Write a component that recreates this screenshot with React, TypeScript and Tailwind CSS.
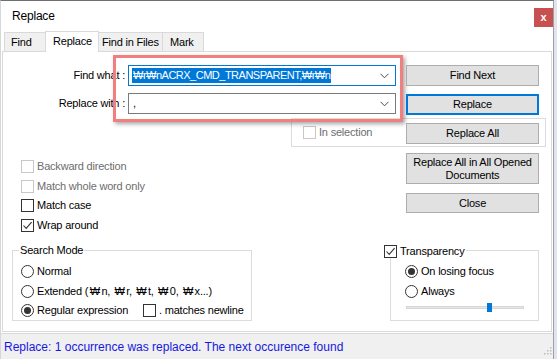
import React from "react";

function Check({ checked = false, disabled = false }: { checked?: boolean; disabled?: boolean }) {
  return (
    <span
      className={`w-[13px] h-[13px] border ${disabled ? "border-[#c8c8c8]" : "border-[#333333]"} bg-white flex items-center justify-center shrink-0`}
    >
      {checked && (
        <svg width="11" height="11" viewBox="0 0 11 11">
          <path d="M1.5 5.5 L4.2 8.4 L9.6 2.2" fill="none" stroke="#333" strokeWidth="1.1" />
        </svg>
      )}
    </span>
  );
}

function Radio({ on = false }: { on?: boolean }) {
  return (
    <span className="w-[13px] h-[13px] rounded-full border border-[#333333] bg-white flex items-center justify-center shrink-0">
      {on && <span className="w-[7px] h-[7px] rounded-full bg-[#333333]" />}
    </span>
  );
}

function Btn({ className, children, def = false }: { className: string; children: React.ReactNode; def?: boolean }) {
  return (
    <div
      className={`w-[133px] shrink-0 bg-[#e1e1e1] ${def ? "border-2 border-[#0078d7]" : "border border-[#adadad]"} flex items-center justify-center text-center leading-[13px] ${className}`}
    >
      {children}
    </div>
  );
}

function Chevron() {
  return (
    <svg width="9" height="6" viewBox="0 0 9 6" className="shrink-0">
      <path d="M0.5 0.8 L4.5 4.8 L8.5 0.8" fill="none" stroke="#4d4d4d" strokeWidth="1" />
    </svg>
  );
}

function Won() {
  return <span className="px-[1.5px]">₩</span>;
}

export default function App() {
  return (
    <div className="w-[557px] h-[359px] bg-[#dfe4ee] overflow-hidden font-['Liberation_Sans','Noto_Sans','Noto_Sans_CJK_KR',sans-serif] text-[11px] tracking-[-0.2px] text-black leading-none">
      <div className="relative w-[554px] h-[359px] bg-white border-t border-t-[#6e6e6e] border-l border-l-[#d4d7de] border-r border-r-[#a0a0a0] flex flex-col">
        {/* title bar */}
        <div className="h-[30px] shrink-0 flex items-center justify-between pl-[11px]">
          <span className="text-[12px] tracking-[-0.2px]">Replace</span>
          <div className="w-[19px] h-[19px] mt-[3px] bg-[#c75050] flex items-center justify-center text-white text-[11px] font-bold">
            x
          </div>
        </div>

        {/* tabs */}
        <div className="h-[20px] shrink-0 flex items-end pl-[3px]">
          <div className="w-[41px] h-[19px] bg-[#f0f0f0] border border-b-0 border-r-0 border-[#d9d9d9] flex items-center pl-[6px]">
            Find
          </div>
          <div className="w-[54px] h-[21px] -mb-px relative z-10 bg-white border border-b-0 border-[#d9d9d9] flex items-center pl-[7px] pb-[2px]">
            Replace
          </div>
          <div className="w-[64px] h-[19px] bg-[#f0f0f0] border border-b-0 border-l-0 border-[#d9d9d9] flex items-center pl-[3px]">
            Find in Files
          </div>
          <div className="w-[41px] h-[19px] bg-[#f0f0f0] border border-b-0 border-l-0 border-[#d9d9d9] flex items-center pl-[7px]">
            Mark
          </div>
        </div>

        {/* panel */}
        <div className="ml-px w-[550px] h-[281px] shrink-0 border border-[#d9d9d9] flex flex-col">
          <div className="flex">
            {/* left column */}
            <div className="w-[403px] flex flex-col">
              <div className="mt-[13px] h-[21px] flex items-center">
                <span className="w-[122px] text-right">Find what :</span>
                <div className="ml-[3px] w-[268px] h-[21px] border border-[#0078d7] flex items-center pl-[3px] pr-[6px]">
                  <span className="bg-[#0078d7] text-white h-[15px] flex items-center px-[1px] tracking-[-0.5px]">
                    ₩r₩nACRX_CMD_TRANSPARENT,₩r₩n
                  </span>
                  <span className="flex-1" />
                  <Chevron />
                </div>
              </div>
              <div className="mt-[7px] h-[21px] flex items-center">
                <span className="w-[122px] text-right">Replace with :</span>
                <div className="ml-[3px] w-[268px] h-[21px] border border-[#7a7a7a] flex items-center pl-[4px] pr-[6px]">
                  <span>,</span>
                  <span className="flex-1" />
                  <Chevron />
                </div>
              </div>
              <div className="mt-[4px] ml-[288px] w-[255px] h-[29px] shrink-0 border border-[#dcdcdc] flex items-center pl-[11px]">
                <Check disabled />
                <span className="ml-[3px] text-[#6d6d6d]">In selection</span>
              </div>
              <div className="mt-[9px] ml-[18px] flex flex-col">
                <div className="h-[20px] flex items-center gap-[3px]">
                  <Check disabled />
                  <span className="text-[#6d6d6d]">Backward direction</span>
                </div>
                <div className="h-[20px] flex items-center gap-[3px]">
                  <Check disabled />
                  <span className="text-[#6d6d6d]">Match whole word only</span>
                </div>
                <div className="h-[19px] flex items-center gap-[3px]">
                  <Check />
                  <span>Match case</span>
                </div>
                <div className="h-[20px] flex items-center gap-[3px]">
                  <Check checked />
                  <span>Wrap around</span>
                </div>
              </div>
            </div>

            {/* right column buttons */}
            <div className="w-[133px] flex flex-col relative z-10">
              <Btn className="mt-[13px] h-[21px]">Find Next</Btn>
              <Btn className="mt-[8px] h-[21px]" def>
                Replace
              </Btn>
              <Btn className="mt-[8px] h-[21px]">Replace All</Btn>
              <Btn className="mt-[9px] h-[31px]">
                Replace All in All Opened
                <br />
                Documents
              </Btn>
              <Btn className="mt-[9px] h-[20px]">Close</Btn>
            </div>
          </div>

          {/* bottom section */}
          <div className="flex mt-[10px] items-start">
            <div className="mt-[5px] ml-[9px] w-[240px] h-[71px] relative border border-[#dcdcdc] pt-[10px] pl-[8px] flex flex-col">
              <span className="absolute -top-[6px] left-[6px] bg-white px-[1px]">Search Mode</span>
              <div className="h-[20px] flex items-center gap-[3px]">
                <Radio />
                <span>Normal</span>
              </div>
              <div className="h-[20px] flex items-center gap-[3px]">
                <Radio />
                <span>
                  Extended (<Won />n, <Won />r, <Won />t, <Won />0, <Won />x...)
                </span>
              </div>
              <div className="h-[18px] flex items-center">
                <div className="w-[122px] flex items-center gap-[3px]">
                  <Radio on />
                  <span>Regular expression</span>
                </div>
                <Check />
                <span className="ml-[3px]">. matches newline</span>
              </div>
            </div>

            <div className="ml-[132px] w-[154px] relative">
              <div className="absolute top-0 left-0 flex items-center gap-[3px] bg-white pr-[2px] z-10">
                <Check checked />
                <span>Transparency</span>
              </div>
              <div className="mt-[5px] ml-[6px] w-[149px] h-[71px] border border-[#dcdcdc] pt-[10px] pl-[14px] flex flex-col">
                <div className="h-[20px] flex items-center gap-[3px]">
                  <Radio on />
                  <span>On losing focus</span>
                </div>
                <div className="h-[20px] flex items-center gap-[3px]">
                  <Radio />
                  <span>Always</span>
                </div>
                <div className="mt-[5px] ml-px w-[118px] h-[3px] bg-[#e7e7e7] border border-[#d6d6d6] relative">
                  <span className="absolute left-[80px] -top-[4px] w-[5px] h-[9px] bg-[#0078d7]" />
                </div>
              </div>
            </div>
          </div>
        </div>

        {/* status bar */}
        <div className="mt-px h-[26px] shrink-0 bg-[#f0f0f0] border-t border-[#dadada] flex items-center pl-[3px] text-[12px] tracking-[0px] text-[#1818e0] relative">
          Replace: 1 occurrence was replaced. The next occurence found
          <svg width="8" height="8" viewBox="0 0 8 8" className="absolute right-[1px] bottom-[4px]">
            <rect x="6" y="0" width="1.5" height="1.5" fill="#bdbdbd" />
            <rect x="3" y="3" width="1.5" height="1.5" fill="#bdbdbd" />
            <rect x="6" y="3" width="1.5" height="1.5" fill="#bdbdbd" />
            <rect x="0" y="6" width="1.5" height="1.5" fill="#bdbdbd" />
            <rect x="3" y="6" width="1.5" height="1.5" fill="#bdbdbd" />
            <rect x="6" y="6" width="1.5" height="1.5" fill="#bdbdbd" />
          </svg>
        </div>

        {/* red annotation box */}
        <div className="absolute left-[112px] top-[54px] w-[290px] h-[67px] border-[3px] border-[#f27f7f] shadow-[2px_2px_4px_rgba(0,0,0,0.35)] pointer-events-none" />
      </div>
    </div>
  );
}
